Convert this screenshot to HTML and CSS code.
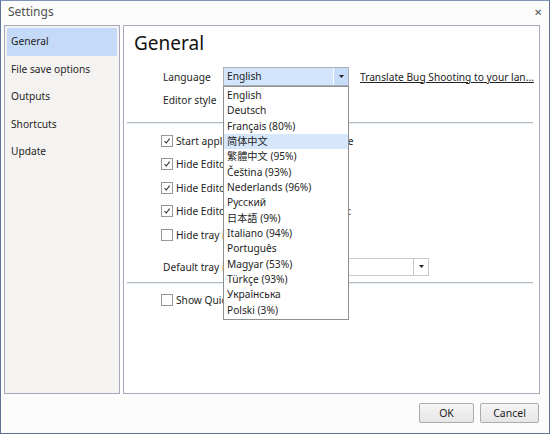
FILE: index.html
```html
<!DOCTYPE html>
<html>
<head>
<meta charset="utf-8">
<link rel="stylesheet" href="styles.css">
</head>
<body>
<div class="window">
  <div class="titlebar">
    <span class="title">Settings</span>
    <span class="close">✕</span>
  </div>
  <div class="content">
    <div class="sidebar">
      <div class="nav-item selected">General</div>
      <div class="nav-item">File save options</div>
      <div class="nav-item">Outputs</div>
      <div class="nav-item">Shortcuts</div>
      <div class="nav-item">Update</div>
    </div>
    <div class="main">
      <h1 class="heading">General</h1>
      <div class="form-row lang-row">
        <span class="label">Language</span>
        <div class="combo-wrap">
          <div class="combo lang-combo">
            <span class="combo-text">English</span>
            <span class="combo-btn"><svg width="5" height="3" viewBox="0 0 5 3"><path d="M0 0h5L2.5 3z" fill="#222"/></svg></span>
          </div>
          <ul class="dropdown">
            <li>English</li>
            <li>Deutsch</li>
            <li>Français (80%)</li>
            <li class="hover">简体中文</li>
            <li>繁體中文 (95%)</li>
            <li>Čeština (93%)</li>
            <li>Nederlands (96%)</li>
            <li>Русский</li>
            <li>日本語 (9%)</li>
            <li>Italiano (94%)</li>
            <li>Português</li>
            <li>Magyar (53%)</li>
            <li>Türkçe (93%)</li>
            <li>Українська</li>
            <li>Polski (3%)</li>
          </ul>
        </div>
        <a class="link">Translate Bug Shooting to your lan...</a>
      </div>
      <div class="form-row editor-row">
        <span class="label">Editor style</span>
      </div>
      <div class="separator"></div>
      <div class="checks">
        <div class="check-row"><span class="box checked"><svg width="8" height="8" viewBox="0 0 8 8"><path d="M1.5 4.2 3.3 6 6.6 1.6" fill="none" stroke="#333" stroke-width="1.1"/></svg></span><span>Start applications with Windows style</span></div>
        <div class="check-row"><span class="box checked"><svg width="8" height="8" viewBox="0 0 8 8"><path d="M1.5 4.2 3.3 6 6.6 1.6" fill="none" stroke="#333" stroke-width="1.1"/></svg></span><span>Hide Editor on start</span></div>
        <div class="check-row"><span class="box checked"><svg width="8" height="8" viewBox="0 0 8 8"><path d="M1.5 4.2 3.3 6 6.6 1.6" fill="none" stroke="#333" stroke-width="1.1"/></svg></span><span>Hide Editor on capture</span></div>
        <div class="check-row"><span class="box checked"><svg width="8" height="8" viewBox="0 0 8 8"><path d="M1.5 4.2 3.3 6 6.6 1.6" fill="none" stroke="#333" stroke-width="1.1"/></svg></span><span>Hide Editor window, while capturing:</span></div>
        <div class="check-row"><span class="box"></span><span>Hide tray icon</span></div>
      </div>
      <div class="form-row tray-row">
        <span class="label tray-label">Default tray icon</span>
        <div class="combo tray-combo">
          <span class="combo-text"></span>
          <span class="combo-btn plain"><svg width="5" height="3" viewBox="0 0 5 3"><path d="M0 0h5L2.5 3z" fill="#222"/></svg></span>
        </div>
      </div>
      <div class="separator sep2"></div>
      <div class="check-row quick"><span class="box"></span><span>Show Quick</span></div>
    </div>
  </div>
  <div class="footer">
    <button class="btn ok">OK</button>
    <button class="btn cancel">Cancel</button>
  </div>
</div>
</body>
</html>
```
FILE: styles.css
```css
* { box-sizing: border-box; }
html, body { margin: 0; padding: 0; }
body {
  width: 550px;
  height: 434px;
  font-family: "Noto Sans", "Noto Sans CJK SC", sans-serif;
  font-size: 10.2px;
  color: #1e1e1e;
  overflow: hidden;
}
.window {
  width: 550px;
  height: 434px;
  border: 1px solid #5d7397;
  border-top-color: #7d93b8;
  background: #fcfcfc;
  display: flex;
  flex-direction: column;
}
.titlebar {
  height: 24px;
  display: flex;
  align-items: center;
  justify-content: space-between;
  padding: 0 7px 3px 7px;
}
.title {
  font-size: 12px;
  color: #505050;
}
.close {
  font-size: 10px;
  color: #555;
}
.content {
  height: 369px;
  display: flex;
  gap: 3px;
  padding: 0 9px 0 3px;
}
.sidebar {
  flex: none;
  width: 116px;
  background: #f5f3f1;
  border: 1px solid #a4a9bd;
  padding: 2px 2px;
}
.nav-item {
  height: 27.5px;
  line-height: 27.5px;
  padding-left: 4px;
  color: #1e1e1e;
}
.nav-item.selected {
  background: #c5d9f8;
}
.main {
  flex: 1;
  min-width: 0;
  overflow: hidden;
  background: #fff;
  border: 1px solid #a4acbc;
  padding: 3px 3px 0 3px;
  display: flex;
  flex-direction: column;
}
.heading {
  margin: 0 0 0 7px;
  font-weight: normal;
  font-size: 19px;
  line-height: 28px;
  color: #111;
}
.form-row {
  display: flex;
  align-items: center;
  padding-left: 36px;
}
.lang-row {
  margin-top: 10px;
  height: 19px;
}
.label {
  width: 60px;
  flex: none;
}
.combo-wrap {
  position: relative;
  flex: none;
  width: 126px;
  height: 19px;
}
.combo {
  display: flex;
  height: 19px;
  border: 1px solid #a9aeb8;
  background: #fff;
}
.lang-combo .combo-text {
  flex: 1;
  background: #d3e5fc;
  padding-left: 3px;
  line-height: 17px;
}
.combo-btn {
  width: 15px;
  display: flex;
  align-items: center;
  justify-content: center;
  background: #c6dcf9;
  border-left: 1px solid #fff;
}
.combo-btn.plain {
  background: #fff;
  border-left: 1px solid #c9c9c9;
}
.dropdown {
  position: absolute;
  left: 0;
  top: 19px;
  width: 126px;
  margin: 0;
  padding: 1px 0 1px 0;
  list-style: none;
  background: #fff;
  border: 1px solid #8e8f8f;
  z-index: 5;
}
.dropdown li {
  height: 15.35px;
  line-height: 15.35px;
  padding-left: 3px;
  white-space: nowrap;
}
.dropdown li.hover {
  background: #d6e6fb;
}
.link {
  margin-left: 11px;
  color: #222;
  text-decoration: underline;
  white-space: nowrap;
}
.editor-row {
  height: 20px;
  margin-top: 4px;
}
.separator {
  flex: none;
  height: 2px;
  background: #b3bdc6;
  border-bottom: 1px solid #e7ecf0;
  margin: 12px 3px 0 0;
}
.checks {
  margin-top: 5px;
  display: flex;
  flex-direction: column;
}
.check-row {
  height: 23.5px;
  display: flex;
  align-items: center;
  padding-left: 34px;
  white-space: nowrap;
}
.box {
  width: 12px;
  height: 12px;
  border: 1px solid #979797;
  background: #fff;
  margin-right: 3px;
  flex: none;
  display: flex;
  align-items: center;
  justify-content: center;
}
.tray-row {
  margin-top: 11px;
  height: 18px;
}
.tray-label {
  width: 100px;
  white-space: nowrap;
}
.tray-combo {
  width: 166px;
  height: 18px;
  border-color: #c8c8c8;
}
.tray-combo .combo-text {
  flex: 1;
}
.sep2 {
  margin-top: 6px;
}
.quick {
  margin-top: 5px;
}
.footer {
  flex: 1;
  display: flex;
  justify-content: flex-end;
  align-items: center;
  gap: 6px;
  padding: 0 10px 1px 0;
}
.btn {
  height: 20px;
  font-family: inherit;
  font-size: 10.5px;
  color: #1e1e1e;
  background: linear-gradient(#f6f6f6, #e5e5e5);
  border: 1px solid #acacac;
  border-radius: 2px;
  padding: 0;
}
.ok { width: 55px; }
.cancel { width: 59px; }
```
